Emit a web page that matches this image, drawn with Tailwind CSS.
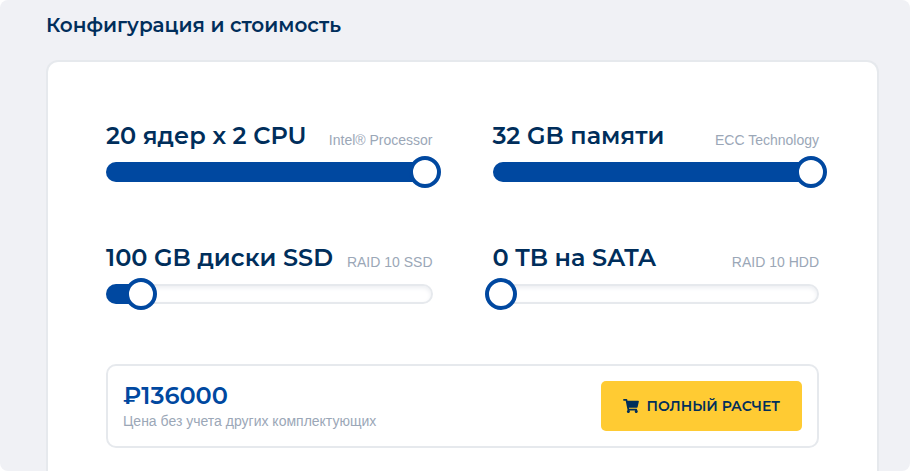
<!DOCTYPE html>
<html lang="ru">
  <head>
    <meta charset="UTF-8" />
    <meta name="viewport" content="width=device-width, initial-scale=1.0" />
    <title>Конфигурация и стоимость</title>
    <script src="https://cdn.jsdelivr.net/npm/@tailwindcss/browser@4"></script>
  </head>
  <body class="bg-white font-['Montserrat','Inter',sans-serif] text-[#002e5b]">
    <main class="flex flex-col min-h-screen pt-2 pl-[46px] pr-[31px] rounded-lg bg-[#f0f1f5]">
      <h1 class="mb-[18px] text-xl leading-[34px] font-semibold">Конфигурация и стоимость</h1>

      <section class="flex-1 px-[58px] pt-[58px] pb-[22px] bg-white border-2 border-b-0 border-[#e6e9ed] rounded-t-xl">
        <!-- Sliders -->
        <div class="grid grid-cols-2 gap-x-[60px] gap-y-[60px]">
          <div>
            <div class="flex items-end justify-between mb-2.5 whitespace-nowrap">
              <label for="cpu" class="text-2xl leading-8 font-semibold">20 ядер х 2 CPU</label>
              <span class="font-['Liberation_Sans',sans-serif] text-sm leading-6 text-[#9ba7b7]">Intel® Processor</span>
            </div>
            <div class="relative h-5 rounded-full border-2 border-[#e6e9ed] shadow-[inset_0_2px_4px_#eceef2]">
              <div class="absolute -inset-y-0.5 -left-0.5 rounded-full bg-[#0048a0]" style="width: calc(100% + 4px)"></div>
              <input id="cpu" type="range" min="0" max="20" value="20" class="absolute -top-2 -left-2.5 h-8 w-[calc(100%+20px)] appearance-none bg-transparent cursor-pointer [&::-webkit-slider-thumb]:appearance-none [&::-webkit-slider-thumb]:size-8 [&::-webkit-slider-thumb]:rounded-full [&::-webkit-slider-thumb]:border-4 [&::-webkit-slider-thumb]:border-solid [&::-webkit-slider-thumb]:border-[#0048a0] [&::-webkit-slider-thumb]:bg-white" />
            </div>
          </div>

          <div>
            <div class="flex items-end justify-between mb-2.5 whitespace-nowrap">
              <label for="ram" class="text-2xl leading-8 font-semibold">32 GB памяти</label>
              <span class="font-['Liberation_Sans',sans-serif] text-sm leading-6 text-[#9ba7b7]">ECC Technology</span>
            </div>
            <div class="relative h-5 rounded-full border-2 border-[#e6e9ed] shadow-[inset_0_2px_4px_#eceef2]">
              <div class="absolute -inset-y-0.5 -left-0.5 rounded-full bg-[#0048a0]" style="width: calc(100% + 4px)"></div>
              <input id="ram" type="range" min="0" max="32" value="32" class="absolute -top-2 -left-2.5 h-8 w-[calc(100%+20px)] appearance-none bg-transparent cursor-pointer [&::-webkit-slider-thumb]:appearance-none [&::-webkit-slider-thumb]:size-8 [&::-webkit-slider-thumb]:rounded-full [&::-webkit-slider-thumb]:border-4 [&::-webkit-slider-thumb]:border-solid [&::-webkit-slider-thumb]:border-[#0048a0] [&::-webkit-slider-thumb]:bg-white" />
            </div>
          </div>

          <div>
            <div class="flex items-end justify-between mb-2.5 whitespace-nowrap">
              <label for="ssd" class="text-2xl leading-8 font-semibold">100 GB диски SSD</label>
              <span class="font-['Liberation_Sans',sans-serif] text-sm leading-6 text-[#9ba7b7]">RAID 10 SSD</span>
            </div>
            <div class="relative h-5 rounded-full border-2 border-[#e6e9ed] shadow-[inset_0_2px_4px_#eceef2]">
              <div class="absolute -inset-y-0.5 -left-0.5 rounded-full bg-[#0048a0]" style="width: 12%"></div>
              <input id="ssd" type="range" min="0" max="1150" step="10" value="100" class="absolute -top-2 -left-2.5 h-8 w-[calc(100%+20px)] appearance-none bg-transparent cursor-pointer [&::-webkit-slider-thumb]:appearance-none [&::-webkit-slider-thumb]:size-8 [&::-webkit-slider-thumb]:rounded-full [&::-webkit-slider-thumb]:border-4 [&::-webkit-slider-thumb]:border-solid [&::-webkit-slider-thumb]:border-[#0048a0] [&::-webkit-slider-thumb]:bg-white" />
            </div>
          </div>

          <div>
            <div class="flex items-end justify-between mb-2.5 whitespace-nowrap">
              <label for="sata" class="text-2xl leading-8 font-semibold">0 TB на SATA</label>
              <span class="font-['Liberation_Sans',sans-serif] text-sm leading-6 text-[#9ba7b7]">RAID 10 HDD</span>
            </div>
            <div class="relative h-5 rounded-full border-2 border-[#e6e9ed] shadow-[inset_0_2px_4px_#eceef2]">
              <input id="sata" type="range" min="0" max="10" value="0" class="absolute -top-2 -left-2.5 h-8 w-[calc(100%+20px)] appearance-none bg-transparent cursor-pointer [&::-webkit-slider-thumb]:appearance-none [&::-webkit-slider-thumb]:size-8 [&::-webkit-slider-thumb]:rounded-full [&::-webkit-slider-thumb]:border-4 [&::-webkit-slider-thumb]:border-solid [&::-webkit-slider-thumb]:border-[#0048a0] [&::-webkit-slider-thumb]:bg-white" />
            </div>
          </div>
        </div>

        <!-- Price -->
        <div class="flex items-center justify-between mt-[60px] p-[15px] border-2 border-[#e6e9ed] rounded-[10px]">
          <div>
            <p class="text-2xl leading-[30px] font-semibold text-[#0048a0]">₽136000</p>
            <p class="font-['Liberation_Sans',sans-serif] text-sm leading-5 text-[#9ba7b7]">Цена без учета других комплектующих</p>
          </div>
          <button type="button" class="flex items-center justify-center gap-2 h-[50px] px-[22px] rounded-[5px] bg-[#ffcb33] text-sm font-semibold whitespace-nowrap cursor-pointer">
            <svg class="w-4 h-3.5" viewBox="0 0 576 512" fill="currentColor" aria-hidden="true">
              <path d="M528.1 301.3l47.3-208C578.8 78.3 567.4 64 552 64H159.2l-9.2-44.8C147.8 8 137.9 0 126.5 0H24C10.7 0 0 10.7 0 24v16c0 13.3 10.7 24 24 24h69.9l70.2 343.4C147.3 417.1 136 435.2 136 456c0 30.9 25.1 56 56 56s56-25.1 56-56c0-15.7-6.4-29.8-16.8-40h209.6C430.4 426.2 424 440.3 424 456c0 30.9 25.1 56 56 56s56-25.1 56-56c0-22.2-12.9-41.3-31.6-50.4l5.5-24.3c3.4-15-8-29.3-23.4-29.3H218.1l-6.5-32h293.1c11.2 0 20.9-7.8 23.4-18.7z" />
            </svg>
            ПОЛНЫЙ РАСЧЕТ
          </button>
        </div>
      </section>
    </main>
  </body>
</html>
